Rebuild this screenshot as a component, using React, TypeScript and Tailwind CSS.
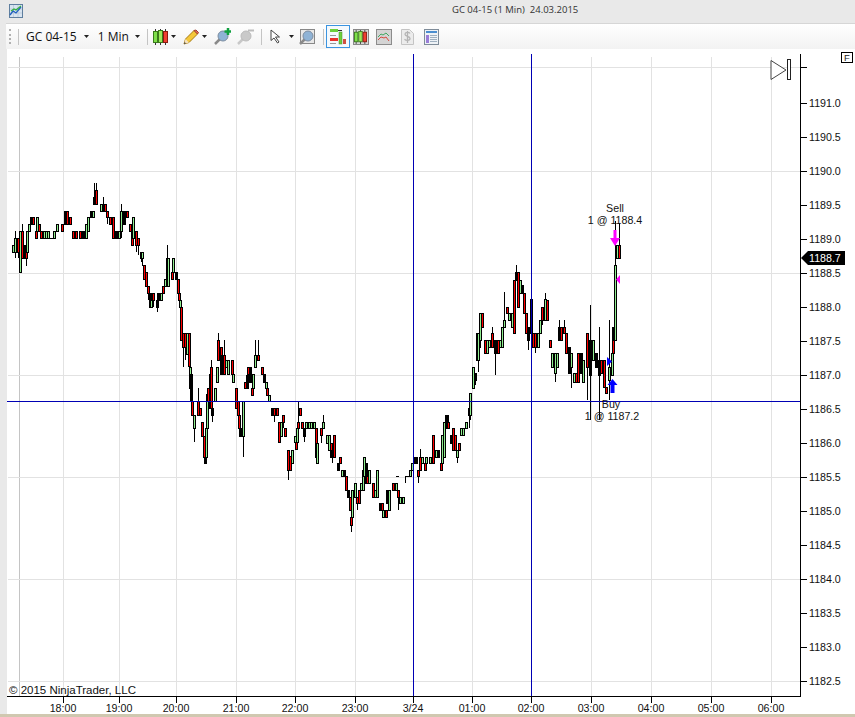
import React from 'react';

// x wickTop bodyTop bodyBottom wickBottom colour (pixel rows read off the chart)
const RAW = `
13 245 245 252 252 g
15 231 238 252 258 g
18 238 238 252 258 r
20 231 231 272 272 g
22 224 231 258 258 r
24 245 245 258 258 k
26 231 252 258 266 r
27 231 231 252 252 g
29 224 224 231 231 g
31 217 217 224 224 k
33 217 217 224 224 r
36 231 231 238 238 r
37 217 217 231 231 g
39 224 224 231 231 r
41 231 231 238 238 r
44 231 231 238 238 g
46 231 231 238 238 g
48 231 231 238 238 g
54 231 231 238 238 g
57 224 224 231 231 g
62 224 224 231 231 r
65 211 211 224 224 k
67 211 211 224 224 r
70 217 217 224 224 r
73 231 231 238 238 r
76 231 231 238 238 r
80 231 231 238 238 r
83 231 231 238 238 k
86 224 224 238 238 g
88 217 217 231 231 g
91 211 211 217 217 k
93 211 211 217 217 g
94 183 197 204 204 k
96 183 190 204 204 r
101 204 204 211 211 g
103 197 204 211 211 k
105 204 204 211 211 r
107 211 211 217 224 r
110 217 217 224 224 r
113 217 217 238 238 r
116 231 231 238 238 k
119 231 231 238 238 g
121 204 211 231 238 g
124 211 211 224 224 k
127 211 211 217 217 r
130 224 224 231 231 r
132 231 231 245 245 r
133 217 217 238 238 g
136 231 231 245 252 r
138 238 238 245 255 r
141 252 252 258 262 r
142 252 252 258 266 g
144 265 265 279 279 r
146 272 272 286 286 r
148 286 286 293 300 r
150 293 293 307 307 k
151 300 300 307 307 g
153 293 293 300 307 r
157 300 300 307 312 k
158 293 293 300 300 k
161 293 293 300 300 g
163 286 286 293 293 r
165 279 279 286 286 g
167 245 258 279 279 r
168 258 258 286 286 g
172 272 272 279 279 r
173 258 258 272 272 g
176 272 272 279 279 k
178 279 279 293 293 r
179 293 293 300 300 r
180 300 300 307 307 g
181 307 307 340 340 r
183 333 333 347 367 r
185 333 333 347 360 r
187 333 333 354 354 g
189 333 333 366 366 r
190 367 367 388 388 g
191 374 374 400 400 k
192 401 401 415 415 r
194 415 415 428 442 g
198 388 401 415 415 r
200 408 408 415 415 r
202 422 422 436 436 r
204 436 436 457 457 r
205 457 457 463 463 k
206 428 428 457 457 g
207 394 394 428 428 g
208 388 388 401 401 r
210 374 374 408 408 r
211 360 367 408 408 r
212 408 408 415 422 k
215 388 388 401 401 g
217 367 367 382 382 g
218 333 340 360 360 r
221 347 347 374 374 r
222 355 355 374 374 k
224 340 355 374 374 r
226 360 360 367 367 g
228 360 360 374 374 g
232 360 360 374 374 r
233 374 374 382 382 g
236 388 388 408 408 r
238 401 401 415 415 r
239 415 415 428 428 r
240 428 428 436 436 k
243 401 401 436 457 g
245 382 382 388 388 r
247 375 375 388 388 k
248 367 367 374 374 r
250 367 367 382 382 k
252 388 388 395 395 r
253 374 374 388 388 g
255 340 355 367 367 g
258 340 355 360 360 r
262 367 367 374 374 r
264 374 374 382 382 k
266 382 382 388 388 g
267 388 388 395 395 r
269 395 395 401 401 g
272 408 408 415 415 k
274 408 408 415 422 r
277 408 408 415 415 r
279 422 422 442 442 r
281 422 422 436 436 g
283 415 415 422 428 r
285 428 428 436 436 r
288 450 450 470 480 r
290 456 456 470 470 r
292 450 450 463 463 g
295 436 436 442 442 g
296 442 442 449 449 r
297 428 428 442 442 g
298 401 422 428 428 r
300 408 408 415 415 r
302 422 422 428 428 r
304 428 428 436 442 k
306 422 422 428 428 g
309 422 422 428 428 g
311 422 422 428 428 g
314 422 422 428 428 g
316 428 428 457 457 r
317 443 443 463 463 g
321 428 428 435 443 r
323 415 422 428 428 g
327 435 435 443 443 g
329 435 435 450 450 g
331 443 443 457 457 r
332 450 450 457 463 k
334 435 435 457 457 r
338 463 463 470 470 k
340 457 457 463 463 r
342 470 470 476 476 g
344 470 470 476 476 k
346 476 476 490 490 r
348 490 490 497 497 k
350 497 497 510 510 r
351 517 517 525 532 r
352 490 490 517 517 g
355 483 483 497 497 g
357 497 497 503 510 r
359 490 490 503 503 r
361 483 483 490 490 g
363 470 470 490 490 g
364 457 457 476 476 g
366 463 463 483 483 k
367 476 476 483 483 r
369 470 470 483 483 g
373 483 483 497 497 r
375 490 490 497 497 g
377 470 470 497 497 g
380 503 503 510 510 k
382 503 503 510 510 r
383 510 510 517 517 g
386 510 510 517 517 r
387 490 490 503 503 k
389 490 490 510 510 g
393 483 483 490 490 r
396 483 483 490 490 g
398 490 490 497 510 r
400 497 497 503 503 g
403 497 497 503 503 g
410 470 470 476 476 g
412 463 463 470 470 g
414 457 457 463 463 k
416 457 457 463 463 k
418 470 470 476 483 r
420 449 457 470 470 r
422 457 457 463 463 g
425 463 463 470 470 r
426 457 457 463 463 g
430 457 457 463 463 g
433 435 435 463 463 r
436 450 450 457 457 g
438 450 450 457 457 k
441 463 463 470 470 r
442 435 435 463 463 g
444 422 422 457 457 g
446 415 415 428 428 k
448 415 422 428 428 r
451 435 435 443 443 k
453 428 428 450 450 r
455 435 435 450 450 r
457 450 450 457 463 g
459 443 443 450 450 r
461 428 428 435 435 g
463 428 428 435 435 g
466 422 422 428 428 g
469 408 408 415 428 k
470 393 393 415 420 g
473 367 367 388 388 g
475 373 373 380 385 k
477 333 333 360 360 r
478 333 333 360 372 g
480 313 313 340 348 g
482 313 313 327 327 r
485 340 340 353 353 r
487 340 340 353 353 g
489 340 340 347 347 g
492 327 333 347 347 r
495 340 340 353 375 k
498 340 340 353 353 r
500 340 340 347 347 g
502 327 327 347 347 g
504 292 320 327 327 g
507 307 307 313 313 r
509 313 313 320 320 g
512 313 313 327 327 g
514 280 280 333 333 r
516 265 272 280 280 k
518 272 272 307 307 r
520 280 280 293 293 g
522 285 285 293 293 k
524 293 293 313 313 r
526 313 313 333 333 r
528 327 327 340 350 k
531 299 299 333 340 k
533 333 333 347 347 r
535 333 333 347 353 r
538 333 333 347 347 g
540 320 320 333 333 g
542 307 307 320 325 r
545 293 299 320 320 g
547 300 300 320 320 r
550 340 340 347 347 r
552 353 353 367 367 g
555 353 353 373 382 g
557 353 353 367 367 g
559 320 327 340 340 k
561 327 327 340 340 r
564 320 327 333 333 r
566 333 333 353 353 r
569 347 347 373 373 k
571 353 353 367 388 g
574 373 373 382 382 g
576 373 373 382 382 r
578 353 353 382 382 r
581 353 353 373 373 k
583 360 360 382 382 g
587 333 333 367 400 r
590 305 340 375 420 k
593 340 340 360 360 g
596 353 353 367 367 k
599 327 360 375 420 k
601 360 360 373 373 r
604 360 360 387 387 r
606 387 387 393 393 r
609 320 367 380 400 g
612 353 353 375 375 g
613 327 327 353 353 k
613 340 340 353 353 r
615 221 265 340 340 g
617 245 245 258 258 g
619 223 245 258 258 r
`;

type Candle = { x: number; hi: number; top: number; bot: number; lo: number; c: string };

const candles: Candle[] = RAW.trim()
  .split('\n')
  .map((row) => {
    const p = row.split(' ');
    return { x: +p[0], hi: +p[1], top: +p[2], bot: +p[3], lo: +p[4], c: p[5] };
  });

const FILL: Record<string, string> = { r: '#ff0000', g: '#90ee90', k: '#000000' };

const gridX = [63, 119, 176, 236, 295, 355, 472, 591, 651, 711, 771];
const gridY = [67, 171, 273, 375, 477, 579, 681];
const times: [number, string][] = [
  [63, '18:00'], [119, '19:00'], [176, '20:00'], [236, '21:00'], [295, '22:00'], [355, '23:00'],
  [413, '3/24'], [472, '01:00'], [531, '02:00'], [591, '03:00'], [651, '04:00'], [711, '05:00'], [771, '06:00'],
];
const prices = [
  '1191.0', '1190.5', '1190.0', '1189.5', '1189.0', '1188.5', '1188.0', '1187.5', '1187.0',
  '1186.5', '1186.0', '1185.5', '1185.0', '1184.5', '1184.0', '1183.5', '1183.0', '1182.5',
];

const Caret = () => (
  <svg width="5" height="3" viewBox="0 0 5 3" className="shrink-0">
    <path d="M0 0h5L2.500 3z" fill="#222" />
  </svg>
);

const Sep = ({ className }: { className: string }) => <div className={`h-[16px] w-px bg-[#c4c4c4] shrink-0 ${className}`} />;

const CandlesIcon = ({ w = 15 }: { w?: number }) => (
  <svg width={w} height="16" viewBox="0 0 15 16" className="shrink-0">
    <path d="M2.500 0v16M7.500 0v16M12.500 0v16" stroke="#333" />
    <rect x="0.500" y="2.500" width="4" height="11" fill="#7ee04a" stroke="#3a7a1a" />
    <rect x="5.500" y="1.500" width="4" height="12" fill="#9bea5a" stroke="#3a7a1a" />
    <rect x="10.500" y="2.500" width="4" height="11" fill="#f04030" stroke="#8a1a10" />
  </svg>
);

const Pencil = () => (
  <svg width="16" height="16" viewBox="0 0 16 16" className="shrink-0">
    <path d="M1 15l1.500-5L11 1.500l3.500 3.500L6 13.500z" fill="#f5c83a" stroke="#a87a10" />
    <path d="M11 1.500l3.500 3.500 1-1.500L13 1z" fill="#e86a5a" stroke="#a04030" />
    <path d="M1 15l1.500-5 3.500 3.500z" fill="#f6e3c0" />
    <path d="M1 15l.6-2 1.400 1.400z" fill="#333" />
  </svg>
);

const Magnifier = ({ plus, dim }: { plus?: boolean; dim?: boolean }) => (
  <svg width="17" height="17" viewBox="0 0 17 17" className="shrink-0">
    <path d="M1 16l5-5" stroke={dim ? '#c8c8c8' : '#8a8a8a'} strokeWidth="2.500" />
    <circle cx="9" cy="8" r="5" fill={dim ? '#c9c9c9' : '#8fb3d6'} stroke={dim ? '#bbbbbb' : '#7c8ca0'} />
    {plus && <path d="M14 0v7M10.500 3.500h7" stroke="#10a040" strokeWidth="2.500" />}
    {dim && <path d="M11 2.500h6" stroke="#bdbdbd" strokeWidth="2" />}
  </svg>
);

const ToolbarIcons = () => (
  <>
    <svg width="14" height="15" viewBox="0 0 14 15" className="ml-[8px] shrink-0">
      <path d="M1 1l0 10.500 3-2.500 3.500 5 1.500-1-3.500-5 4 0z" fill="#fff" stroke="#444" />
    </svg>
    <div className="ml-[5px]"><Caret /></div>
    <div className="ml-[6px] w-[15px] h-[15px] border border-[#888] bg-[#e8e8e8] shrink-0 flex items-center justify-center">
      <Magnifier />
    </div>
    <Sep className="ml-[8px]" />
    <div className="ml-[2px] w-[24px] h-[23px] border border-[#3b94e0] bg-[#f4f9fd] shrink-0 flex items-center justify-center">
      <svg width="16" height="17" viewBox="0 0 16 17">
        <rect x="0" y="1" width="8" height="3" fill="#6cd03c" />
        <rect x="8" y="2" width="4" height="1" fill="#333" />
        <rect x="0" y="10" width="8" height="3" fill="#e8302a" />
        <rect x="0" y="7" width="6" height="1" fill="#999" />
        <rect x="0" y="15" width="6" height="1" fill="#999" />
        <rect x="9" y="4" width="3" height="12" fill="#6cd03c" stroke="#4a8a2a" strokeWidth="0.500" />
        <rect x="13" y="11" width="3" height="5" fill="#d05040" />
      </svg>
    </div>
    <div className="ml-[3px] w-[16px] h-[16px] border border-[#888] bg-[#d8d8d8] shrink-0 flex items-center justify-center">
      <CandlesIcon w={13} />
    </div>
    <svg width="16" height="16" viewBox="0 0 16 16" className="ml-[7px] shrink-0">
      <rect x="0.500" y="0.500" width="15" height="15" fill="#d4d4d4" stroke="#8c8c8c" />
      <path d="M2 8l3-3 2 1 3-2 3 3" stroke="#40a860" fill="none" />
      <path d="M2 11l3-3 3 1 2-1 3 4" stroke="#d84a40" fill="none" />
    </svg>
    <svg width="13" height="16" viewBox="0 0 13 16" className="ml-[9px] shrink-0">
      <path d="M.5.500h8l4 4v11H.500z" fill="#ececec" stroke="#c4c4c4" />
      <path d="M9 4.500c-1-1.500-5-1.500-5 .8 0 2.700 5 1.500 5 4.200 0 2.300-4 2.300-5.500.8M6.500 2v12" stroke="#b4b4b4" strokeWidth="1.300" fill="none" />
    </svg>
    <svg width="15" height="16" viewBox="0 0 15 16" className="ml-[10px] shrink-0">
      <rect x="0.500" y="0.500" width="14" height="15" fill="#eef2f6" stroke="#7f8c99" />
      <rect x="2" y="2" width="11" height="2" fill="#4a8ed0" />
      <rect x="2" y="6" width="3" height="8" fill="#9a7ed8" />
      <path d="M6 6.500h7M6 8.500h7M6 10.500h7M6 12.500h7" stroke="#9fb0c0" />
    </svg>
  </>
);

const App: React.FC = () => {
  return (
    <div className="w-[855px] h-[717px] overflow-hidden flex flex-col bg-[#e9e9e9] font-['Liberation_Sans',Arial,sans-serif]">
      {/* Title bar */}
      <div className="h-[23px] shrink-0 flex items-center pl-[9px]">
        <svg width="14" height="14" viewBox="0 0 14 14" className="mb-[2px] shrink-0">
          <rect x="0.500" y="0.500" width="13" height="13" fill="#d8e4f0" stroke="#5f7f9f" />
          <path d="M4.500 1v12M9 1v12M1 5h12M1 9h12" stroke="#aabbcc" strokeWidth="0.500" />
          <path d="M1 11l3-4 3 2 5-6" stroke="#2060c0" strokeWidth="1.300" fill="none" />
          <path d="M2 7l3-2 2 1 5-4" stroke="#30b040" strokeWidth="1.200" fill="none" />
        </svg>
        <span className="ml-[429px] mb-[2px] text-[9.500px] text-[#333] font-['Open_Sans',sans-serif] whitespace-nowrap">
          GC 04-15 (1 Min)&nbsp;&nbsp;24.03.2015
        </span>
      </div>

      {/* Toolbar */}
      <div className="h-[26px] ml-[6px] shrink-0 flex items-center border-t border-[#d6d6d6] bg-gradient-to-b from-white to-[#f2f2f2] font-['Open_Sans',sans-serif] text-[12px] text-[#111]">
        <div className="ml-[3px] w-[2px] h-[15px] shrink-0 border-l-2 border-dotted border-[#b0b0b0]" />
        <Sep className="ml-[7px]" />
        <span className="ml-[7px] whitespace-nowrap">GC 04-15</span>
        <div className="ml-[7px]"><Caret /></div>
        <span className="ml-[9px] whitespace-nowrap">1 Min</span>
        <div className="ml-[6px]"><Caret /></div>
        <Sep className="ml-[7px]" />
        <div className="ml-[5px]"><CandlesIcon /></div>
        <div className="ml-[3px]"><Caret /></div>
        <div className="ml-[7px]"><Pencil /></div>
        <div className="ml-[3px]"><Caret /></div>
        <div className="ml-[7px]"><Magnifier plus /></div>
        <div className="ml-[6px]"><Magnifier dim /></div>
        <Sep className="ml-[7px]" />
        <ToolbarIcons />
      </div>

      {/* Chart */}
      <div className="ml-[7px] h-[665px] shrink-0 bg-white">
        <svg width="848" height="665" viewBox="7 49 848 665" className="block" fontFamily="'Liberation Sans', Arial, sans-serif" fontSize="10.670">
          <g stroke="#e2e2e2" shapeRendering="crispEdges">
            {gridX.map((x) => <line key={x} x1={x + 0.5} x2={x + 0.5} y1="57" y2="696" />)}
            <line x1="19.500" x2="19.500" y1="57" y2="696" stroke="#c4c4c4" />
            {gridY.map((y) => <line key={y} x1="8" x2="800" y1={y + 0.5} y2={y + 0.5} />)}
          </g>

          <g shapeRendering="crispEdges">
            {candles.map((k, i) => (
              <g key={i}>
                <line x1={k.x + 0.5} x2={k.x + 0.5} y1={k.hi} y2={k.lo} stroke="#000" />
                <rect x={k.x - 0.5} y={k.top + 0.5} width="2" height={Math.max(k.bot - k.top, 1)} fill={FILL[k.c]} stroke="#000" />
              </g>
            ))}
            {/* flat ticks with no body */}
            <path d="M396 476h3M405 476h3M405 483v-7M408 476h2M50 238h6M110 217h4M28 224h3" stroke="#000" fill="none" />
          </g>

          <g stroke="#0000b4" shapeRendering="crispEdges">
            <line x1="413.500" x2="413.500" y1="54" y2="696" />
            <line x1="531.500" x2="531.500" y1="54" y2="696" />
            <line x1="7" x2="800" y1="401.500" y2="401.500" />
          </g>

          {/* Executions */}
          <path d="M613.500 230h3v8h3.500l-5 8-5-8h3.500z" fill="#ff00ff" />
          <path d="M620 275v9l-4-4.500z" fill="#ff00ff" />
          <path d="M607 357v9l5-4.500z" fill="#0000ff" />
          <path d="M610.500 393v-8h-3l5-6 5 6h-3v8z" fill="#0000ff" />
          <g fill="#111" textAnchor="middle">
            <text x="615" y="212">Sell</text>
            <text x="615" y="224">1 @ 1188.4</text>
            <text x="611" y="408">Buy</text>
            <text x="612" y="420">1 @ 1187.2</text>
          </g>

          {/* Play / range marker */}
          <path d="M771 60.500v19l15-9.500z" fill="#fff" stroke="#444" />
          <rect x="787.500" y="59.500" width="3" height="20" fill="#fff" stroke="#222" shapeRendering="crispEdges" />

          {/* Axes */}
          <g stroke="#000" shapeRendering="crispEdges">
            <line x1="800.500" x2="800.500" y1="54" y2="697" />
            <line x1="7" x2="801" y1="696.500" y2="696.500" />
            <line x1="800" x2="807" y1="67.500" y2="67.500" />
            {prices.map((_, i) => <line key={i} x1="800" x2="807" y1={103.500 + i * 34} y2={103.500 + i * 34} />)}
            {times.map(([x]) => <line key={x} x1={x + 0.5} x2={x + 0.5} y1="696" y2="703" />)}
          </g>
          <g fill="#111">
            {prices.map((p, i) => <text key={p} x="809" y={107 + i * 34}>{p}</text>)}
          </g>
          <g fill="#111" textAnchor="middle">
            {times.map(([x, t]) => <text key={x} x={x} y="712">{t}</text>)}
          </g>
          <text x="9" y="694" fill="#111" fontSize="11.500">© 2015 NinjaTrader, LLC</text>

          {/* Last price tag */}
          <path d="M801 258l7-7h37v14h-37z" fill="#000" />
          <text x="809" y="262" fill="#fff">1188.7</text>

          <rect x="841.500" y="52.500" width="11" height="10" fill="#fff" stroke="#000" shapeRendering="crispEdges" />
          <text x="844" y="61" fontSize="9.500" fill="#222">F</text>
        </svg>
      </div>

      <div className="flex-1 bg-[#d0c8b0]" />
    </div>
  );
};

export default App;
